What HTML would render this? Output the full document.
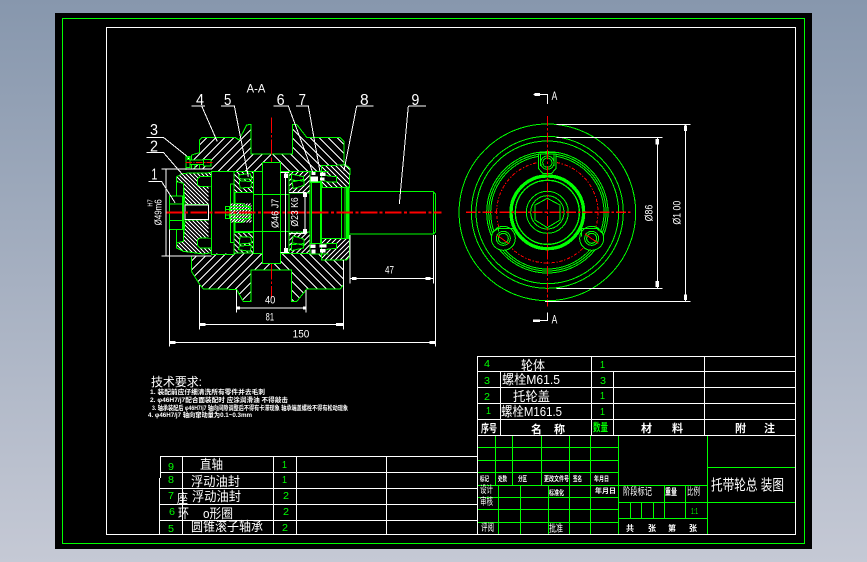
<!DOCTYPE html>
<html>
<head>
<meta charset="utf-8">
<style>
html,body{margin:0;padding:0;width:867px;height:562px;overflow:hidden;background:linear-gradient(#8797ad,#c5c9d5);}
svg{position:absolute;left:0;top:0;display:block;}
text{font-family:"Liberation Sans","Noto Sans CJK SC",sans-serif;fill:#fff;}
.g{fill:#0f0;}
.b{font-weight:bold;}
</style>
</head>
<body>
<svg width="867" height="562" viewBox="0 0 867 562" xmlns="http://www.w3.org/2000/svg" shape-rendering="crispEdges">
<defs>
<pattern id="h1" patternUnits="userSpaceOnUse" width="15" height="15"><path d="M-3 3L3 -3M0 15L15 0M12 18L18 12" stroke="#fff" stroke-width="3" fill="none"/></pattern>
<pattern id="h2" patternUnits="userSpaceOnUse" width="15" height="15"><path d="M-3 12L3 18M0 0L15 15M12 -3L18 3" stroke="#fff" stroke-width="3" fill="none"/></pattern>
<pattern id="h3" patternUnits="userSpaceOnUse" width="12" height="12"><path d="M-3 9L3 15M0 0L12 12M9 -3L15 3" stroke="#fff" stroke-width="3" fill="none"/></pattern>
<pattern id="h4" patternUnits="userSpaceOnUse" width="9" height="9"><path d="M0 9L9 0M-2 2L2 -2M7 11L11 7" stroke="#fff" stroke-width="3" fill="none"/></pattern>
<clipPath id="cl"><path d="M155 225L178 218L178 180L186 172L285 172L297 180L320 135L333 133L333 222L394 222L394 570L333 570L333 665L310 665L290 628L190 627L178 612L155 575Z"/></clipPath>
<clipPath id="cr"><path d="M394 222L457 222L457 133L470 133L500 172L600 172L612 185L612 255L545 255L545 540L610 540L610 615L600 627L500 627L490 640L470 665L455 665L455 570L394 570Z"/></clipPath>
</defs>
<rect x="55" y="13" width="757" height="536" fill="#000"/>
<rect x="62.5" y="18.5" width="742" height="525" fill="none" stroke="#0f0"/>
<rect x="106.5" y="27.5" width="689" height="507" fill="none" stroke="#fff"/>

<!-- section view, coordinates at 3x -->
<g transform="translate(140,80) scale(.33333)" fill="none" stroke-width="3">
<!-- body hatch, explicit lines -->
<path clip-path="url(#cl)" stroke="#fff" d="M320 0L-380 700M347 0L-353 700M374 0L-326 700M401 0L-299 700M428 0L-272 700M455 0L-245 700M482 0L-218 700M509 0L-191 700M536 0L-164 700M563 0L-137 700M590 0L-110 700M617 0L-83 700M644 0L-56 700M671 0L-29 700M698 0L-2 700M725 0L25 700M752 0L52 700M779 0L79 700M806 0L106 700M833 0L133 700M860 0L160 700M887 0L187 700M914 0L214 700M941 0L241 700M968 0L268 700M995 0L295 700M1022 0L322 700"/>
<path clip-path="url(#cr)" stroke="#fff" d="M-310 0L390 700M-283 0L417 700M-256 0L444 700M-229 0L471 700M-202 0L498 700M-175 0L525 700M-148 0L552 700M-121 0L579 700M-94 0L606 700M-67 0L633 700M-40 0L660 700M-13 0L687 700M14 0L714 700M41 0L741 700M68 0L768 700M95 0L795 700M122 0L822 700M149 0L849 700M176 0L876 700M203 0L903 700M230 0L930 700M257 0L957 700M284 0L984 700M311 0L1011 700M338 0L1038 700M365 0L1065 700M392 0L1092 700M419 0L1119 700M446 0L1146 700M473 0L1173 700M500 0L1200 700"/>
<path d="M155 225L178 218L178 180L186 172L285 172L297 180L320 135L333 133L333 222L457 222L457 133L470 133L500 172L600 172L612 185L612 255M545 540L610 540L610 615L600 627L500 627L490 640L470 665L455 665L455 570L333 570L333 665L310 665L290 628L190 627L178 612L155 575" stroke="#0f0"/>
<rect x="155" y="268" width="60" height="262" fill="#000"/>
<rect x="215" y="275" width="330" height="245" fill="#000"/>
<rect x="367" y="247" width="55" height="303" fill="#000"/>
<path d="M155 225L155 268M155 530L155 575" stroke="#0f0"/>
<rect x="367" y="247" width="55" height="303" stroke="#0f0"/>
<path d="M340 275L367 275M422 275L447 275M340 520L367 520M422 520L447 520M215 275L282 275M215 523L282 523" stroke="#0f0"/>
<!-- bolt 3 -->
<path d="M138 230L150 230L150 262L138 262Z" stroke="#0f0" fill="#000"/>
<path d="M150 240L190 240L190 254L150 254Z" stroke="#0f0" fill="#000"/>
<path d="M190 238L213 238L213 258L190 258Z" stroke="#0f0" fill="#000"/>
<rect x="142" y="232" width="6" height="6" fill="#fff" stroke="#0f0"/>
<path d="M138 262L138 270M165 254L165 266M178 254L178 266" stroke="#0f0"/>
<path d="M136 247L218 247" stroke="#f00" stroke-dasharray="20 4 4 4"/>
<!-- left cap -->
<path d="M110 290L130 280L215 278L215 290L180 290L173 297L173 315L180 320L215 320L215 374L135 374L130 310L110 305Z" fill="url(#h3)" stroke="#0f0"/>
<path d="M110 504L130 514L190 522L215 518L215 504L180 504L173 497L173 479L180 474L215 474L215 420L135 420L130 484L110 489Z" fill="url(#h3)" stroke="#0f0"/>
<path d="M110 305L110 489M130 310L130 484" stroke="#0f0"/>
<rect x="206" y="320" width="9" height="154" fill="#000"/>
<path d="M205 372L205 420" stroke="#0f0"/>
<path d="M135 375H205V418H135Z" stroke="#fff" fill="#000"/>
<rect x="88" y="348" width="39" height="100" fill="#000" stroke="#0f0"/>
<path d="M88 372H127M88 422H127" stroke="#0f0"/>
<!-- inner left -->
<rect x="215" y="275" width="67" height="248" stroke="#0f0"/>
<rect x="272" y="312" width="10" height="175" stroke="#0f0"/>
<rect x="285" y="337" width="55" height="118" stroke="#0f0"/>
<rect x="340" y="343" width="107" height="112" stroke="#0f0"/>
<!-- center screw -->
<rect x="272" y="370" width="62" height="58" fill="url(#h4)"/>
<path d="M256 379H332V415H256ZM256 388H332M256 405H332M268 379V415M282 370L305 370L332 385M282 428L305 428L332 410" stroke="#0f0" fill="none"/>
<!-- bearing left -->
<g>
<rect x="282" y="275" width="58" height="62" fill="url(#h2)" stroke="#0f0"/>
<path d="M296 285L330 280L335 298L298 296ZM298 302L335 305L332 322L300 324Z" fill="#000" stroke="#0f0"/>
</g>
<g transform="translate(0,794) scale(1,-1)">
<rect x="282" y="275" width="58" height="62" fill="url(#h1)" stroke="#0f0"/>
<path d="M296 285L330 280L335 298L298 296ZM298 302L335 305L332 322L300 324Z" fill="#000" stroke="#0f0"/>
</g>
<!-- bearing center right -->
<g>
<rect x="447" y="275" width="63" height="64" fill="url(#h1)" stroke="#0f0"/>
<path d="M454 282L490 290L490 303L454 300ZM456 306L492 298L492 316L460 326Z" fill="#000" stroke="#0f0"/>
</g>
<g transform="translate(0,794) scale(1,-1)">
<rect x="447" y="274" width="63" height="64" fill="url(#h2)" stroke="#0f0"/>
<path d="M454 282L490 290L490 303L454 300ZM456 306L492 298L492 316L460 326Z" fill="#000" stroke="#0f0"/>
</g>
<!-- bearing 7 -->
<rect x="510" y="308" width="35" height="182" fill="#000" stroke="#0f0"/>
<path d="M515 308V490M541 308V490" stroke="#0f0"/>
<!-- cover 8 -->
<path d="M545 257L618 255L630 265L628 322L548 322L545 308Z" fill="url(#h2)" stroke="#0f0"/>
<path d="M545 476L628 476L628 530L620 540L545 540Z" fill="url(#h1)" stroke="#0f0"/>
<path d="M510 275H545V305H510Z" fill="#000" stroke="#0f0"/>
<path d="M510 490H545V522H510Z" fill="#000" stroke="#0f0"/>
<path d="M545 280L565 288L590 290L590 306L565 306L545 300ZM545 515L565 507L590 505L590 490L565 490L545 494Z" fill="#000" stroke="#0f0"/>
<g fill="#fff" stroke="none"><rect x="514" y="276" width="12" height="9"/><rect x="540" y="278" width="16" height="10"/><rect x="512" y="290" width="22" height="14"/><rect x="540" y="292" width="13" height="9"/><rect x="512" y="493" width="14" height="11"/><rect x="538" y="494" width="22" height="9"/><rect x="514" y="509" width="13" height="13"/><rect x="540" y="507" width="17" height="11"/></g>
<path d="M508 275H565M508 522H565" stroke="#0f0" stroke-width="3"/>
<rect x="545" y="322" width="60" height="153" fill="#000" stroke="#0f0"/>
<rect x="605" y="322" width="10" height="153" fill="#000" stroke="#0f0"/>
<path d="M615 322H620V475H615" stroke="#0f0"/>
<rect x="618" y="320" width="11" height="156" fill="#0f0"/>
<!-- shaft -->
<path d="M630 335H880L887 342V455L880 462H630" stroke="#0f0"/>
<path d="M880 335V462" stroke="#0f0"/>
<!-- center lines -->
<path d="M394 113V224M394 232V246M394 552V655" stroke="#f00" stroke-dasharray="46 6 8 6"/>
<path d="M78 397H905" stroke="#f00" stroke-width="6" stroke-dasharray="50 7 9 7"/>
<!-- leaders -->
<g stroke="#fff">
<path d="M155 78H195M185 78L232 185M243 78H283L325 290M400 78H445L520 282M468 78H505L540 275M650 78H700M650 78L612 272M805 78H858M805 78L778 372"/>
<path d="M20 172H70L140 228M20 217H70L140 298M25 305H65L105 368"/>
<!-- dims -->
<path d="M65 267H215M65 528H215M78 267V528"/>
<path d="M88 448V800M886 465V800M90 787H885"/>
<path d="M178 615V748M610 540V748M178 733H610"/>
<path d="M290 630V698M498 630V698M290 684H498"/>
<path d="M630 465V610M880 465V610M630 595H880"/>
<path d="M422 277H447M422 518H447M437 277V518M447 338H500M447 460H500M495 338V460"/>
<path d="M433 282h9v10h-9zM433 505h9v10h-9zM491 340h8v9h-8zM491 448h8v9h-8zM638 592h10v6h-10zM858 592h12v6h-12zM290 681h8v6h-8zM490 681h8v6h-8zM180 730h15v6h-15zM590 730h18v6h-18zM90 784h15v6h-15zM870 784h15v6h-15z" fill="#fff"/>
</g>
<g stroke="none" fill="#fff">
<text x="168" y="75" font-size="46" textLength="24" lengthAdjust="spacingAndGlyphs">4</text>
<text x="252" y="75" font-size="46" textLength="22" lengthAdjust="spacingAndGlyphs">5</text>
<text x="410" y="75" font-size="46" textLength="24" lengthAdjust="spacingAndGlyphs">6</text>
<text x="476" y="75" font-size="46" textLength="22" lengthAdjust="spacingAndGlyphs">7</text>
<text x="660" y="75" font-size="46" textLength="26" lengthAdjust="spacingAndGlyphs">8</text>
<text x="814" y="75" font-size="46" textLength="24" lengthAdjust="spacingAndGlyphs">9</text>
<text x="30" y="165" font-size="46" textLength="24" lengthAdjust="spacingAndGlyphs">3</text>
<text x="30" y="214" font-size="46" textLength="24" lengthAdjust="spacingAndGlyphs">2</text>
<text x="34" y="298" font-size="46" textLength="18" lengthAdjust="spacingAndGlyphs">1</text>
<text x="320" y="37" font-size="36" textLength="56" lengthAdjust="spacingAndGlyphs">A-A</text>
<text x="458" y="773" font-size="32" textLength="50" lengthAdjust="spacingAndGlyphs">150</text>
<text x="377" y="722" font-size="32" textLength="25" lengthAdjust="spacingAndGlyphs">81</text>
<text x="375" y="671" font-size="32" textLength="31" lengthAdjust="spacingAndGlyphs">40</text>
<text x="735" y="581" font-size="32" textLength="27" lengthAdjust="spacingAndGlyphs">47</text>
<text transform="translate(64,436) rotate(-90)" font-size="30" textLength="78" lengthAdjust="spacingAndGlyphs">Ø49m6</text>
<text transform="translate(38,380) rotate(-90)" font-size="22" textLength="22" lengthAdjust="spacingAndGlyphs">H7</text>
<text transform="translate(416,444) rotate(-90)" font-size="30" textLength="88" lengthAdjust="spacingAndGlyphs">Ø46 J7</text>
<text transform="translate(474,440) rotate(-90)" font-size="30" textLength="88" lengthAdjust="spacingAndGlyphs">Ø23 K6</text>
</g>
</g>

<!-- end view, coordinates at 3x -->
<g transform="translate(450,80) scale(.33333)" fill="none" stroke="#0f0" stroke-width="3">
<circle cx="292" cy="397" r="265"/>
<circle cx="292" cy="397" r="228"/>
<circle cx="292" cy="397" r="214"/>
<circle cx="292" cy="397" r="182"/>
<circle cx="292" cy="397" r="176"/>
<circle cx="292" cy="397" r="170"/>
<circle cx="292" cy="397" r="152" stroke="#f00" stroke-dasharray="10 5 4 5"/>
<!-- lobes -->
<circle cx="160" cy="475" r="36" fill="#000"/>
<circle cx="425" cy="475" r="36" fill="#000"/>
<path d="M265 222H318V265L305 280H278L265 265Z" fill="#000"/>
<path d="M272 222V258M312 222V258M265 218H318" />
<circle cx="292" cy="248" r="20"/>
<circle cx="292" cy="248" r="14"/>
<g>
<circle cx="160" cy="475" r="21"/><circle cx="160" cy="475" r="15"/>
<path d="M145 455V445H190M145 445L130 455"/>
</g>
<circle cx="425" cy="475" r="21"/><circle cx="425" cy="475" r="15"/>
<path d="M395 470V445H440M440 445L455 458"/>
<path d="M140 465L178 492M405 462L445 490" stroke="#f00"/>
<circle cx="292" cy="397" r="109" stroke-width="10"/>
<circle cx="292" cy="397" r="96" stroke-width="4"/>
<circle cx="292" cy="397" r="63"/>
<circle cx="292" cy="397" r="50"/>
<path d="M292 355L330 375V420L292 443L255 420V375Z"/>
<path d="M292 108V680" stroke="#f00" stroke-dasharray="30 6 8 6"/>
<path d="M48 397H548" stroke="#f00" stroke-width="5" stroke-dasharray="30 6 8 6"/>
<g stroke="#fff">
<path d="M320 133H722M320 172H638M320 625H638M285 664H722M622 172V625M707 133V664"/>
<path d="M618 178h8v14h-8zM618 605h8v14h-8zM704 138h6v14h-6zM704 645h6v14h-6z" fill="#fff"/>
<path d="M250 43H292V72M292 697V722H250"/>
<path d="M255 40h14v6h-14z" fill="#fff"/>
<path d="M250 720h18v4h-18z" fill="#fff"/>
</g>
<g stroke="none" fill="#fff">
<text x="305" y="60" font-size="36" textLength="17" lengthAdjust="spacingAndGlyphs">A</text>
<text x="305" y="731" font-size="36" textLength="17" lengthAdjust="spacingAndGlyphs">A</text>
<text transform="translate(607,424) rotate(-90)" font-size="32" textLength="50" lengthAdjust="spacingAndGlyphs">Ø86</text>
<text transform="translate(692,434) rotate(-90)" font-size="32" textLength="72" lengthAdjust="spacingAndGlyphs">Ø1 00</text>
</g>
</g>

<!-- BOM right -->
<g stroke="#fff" fill="none">
<path d="M477.5 356.5H795M477.5 371.5H795M477.5 387.5H795M477.5 403.5H795M477.5 419.5H795M477.5 435.5H795"/>
<path d="M477.5 356V534M500.5 372V435M591.5 356V435M613.5 372V435M704.5 356V435"/>
</g>
<!-- left table -->
<g stroke="#fff" fill="none">
<path d="M160.5 456.5H477M160.5 472.5H477M159.5 488.5H477M159.5 504.5H477M159.5 520.5H477"/>
<path d="M160.5 456V478M159.5 478V534M182.5 456V534M273.5 456V534M296.5 456V534M386.5 456V534"/>
</g>
<!-- title block -->
<g stroke="#0f0" fill="none">
<path d="M495.5 436V485M512.5 436V485M541.5 436V485M569.5 436V485M590.5 436V485"/>
<path d="M478 447.5H618M478 460.5H618M478 472.5H618M478 485.5H707"/>
<path d="M498.5 485V534M520.5 485V534M548.5 485V534M569.5 485V534M590.5 485V534"/>
<path d="M478 497.5H618M478 509.5H618M478 522.5H618"/>
<path d="M618.5 436V534M707.5 436V534"/>
<path d="M618 502.5H795M618 518.5H707M707 467.5H795"/>
<path d="M630.5 502V518M641.5 502V518M653.5 502V518M664.5 485V518M685.5 485V518"/>
</g>

<!-- BOM text -->
<g font-size="13">
<text x="521" y="370" textLength="24" lengthAdjust="spacingAndGlyphs">轮体</text>
<text x="502" y="384" textLength="58" lengthAdjust="spacingAndGlyphs">螺栓M61.5</text>
<text x="513" y="401" textLength="37" lengthAdjust="spacingAndGlyphs">托轮盖</text>
<text x="501" y="416" textLength="61" lengthAdjust="spacingAndGlyphs">螺栓M161.5</text>
</g>
<g font-size="11" class="b">
<text x="481" y="432" textLength="16" lengthAdjust="spacingAndGlyphs">序号</text>
<text x="531" y="433" font-size="11" textLength="34" xml:space="preserve">名    称</text>
<text x="593" y="431" class="g" style="fill:#0f0" textLength="15" lengthAdjust="spacingAndGlyphs">数量</text>
<text x="641" y="432" textLength="42" xml:space="preserve">材       料</text>
<text x="735" y="432" textLength="40" xml:space="preserve">附       注</text>
</g>
<g font-size="10" style="fill:#0f0">
<text class="g" x="484" y="367" textLength="6" lengthAdjust="spacingAndGlyphs">4</text>
<text class="g" x="484" y="384" textLength="6" lengthAdjust="spacingAndGlyphs">3</text>
<text class="g" x="484" y="400" textLength="6" lengthAdjust="spacingAndGlyphs">2</text>
<text class="g" x="486" y="414" textLength="5" lengthAdjust="spacingAndGlyphs">1</text>
<text class="g" x="600" y="368" textLength="5" lengthAdjust="spacingAndGlyphs">1</text>
<text class="g" x="600" y="384" textLength="6" lengthAdjust="spacingAndGlyphs">3</text>
<text class="g" x="600" y="399" textLength="5" lengthAdjust="spacingAndGlyphs">1</text>
<text class="g" x="600" y="415" textLength="5" lengthAdjust="spacingAndGlyphs">1</text>
<text class="g" x="168" y="470" textLength="6" lengthAdjust="spacingAndGlyphs">9</text>
<text class="g" x="168" y="483" textLength="6" lengthAdjust="spacingAndGlyphs">8</text>
<text class="g" x="168" y="499" textLength="6" lengthAdjust="spacingAndGlyphs">7</text>
<text class="g" x="169" y="515" textLength="6" lengthAdjust="spacingAndGlyphs">6</text>
<text class="g" x="168" y="532" textLength="6" lengthAdjust="spacingAndGlyphs">5</text>
<text class="g" x="282" y="468" textLength="5" lengthAdjust="spacingAndGlyphs">1</text>
<text class="g" x="282" y="483" textLength="5" lengthAdjust="spacingAndGlyphs">1</text>
<text class="g" x="283" y="499" textLength="6" lengthAdjust="spacingAndGlyphs">2</text>
<text class="g" x="283" y="515" textLength="6" lengthAdjust="spacingAndGlyphs">2</text>
<text class="g" x="282" y="531" textLength="6" lengthAdjust="spacingAndGlyphs">2</text>
</g>
<!-- left table text -->
<g font-size="13">
<text x="200" y="469" textLength="23" lengthAdjust="spacingAndGlyphs">直轴</text>
<text x="191" y="486" textLength="49" lengthAdjust="spacingAndGlyphs">浮动油封</text>
<text x="177" y="503" textLength="11" lengthAdjust="spacingAndGlyphs">座</text>
<text x="192" y="501" textLength="49" lengthAdjust="spacingAndGlyphs">浮动油封</text>
<text x="178" y="518" textLength="11" lengthAdjust="spacingAndGlyphs">环</text>
<text x="203" y="518" textLength="30" lengthAdjust="spacingAndGlyphs">o形圈</text>
<text x="191" y="531" textLength="72" lengthAdjust="spacingAndGlyphs">圆锥滚子轴承</text>
</g>
<!-- tech requirements -->
<text x="151" y="386" font-size="12" textLength="51" lengthAdjust="spacing">技术要求:</text>
<g font-size="6.5" class="b">
<text x="150" y="394" textLength="115" lengthAdjust="spacingAndGlyphs">1. 装配前应仔细清洗所有零件并去毛刺</text>
<text x="150" y="402" textLength="138" lengthAdjust="spacingAndGlyphs">2. φ46H7/j7配合面装配时  应涂润滑油 不得敲击</text>
<text x="152" y="410" textLength="196" lengthAdjust="spacingAndGlyphs">3. 轴承装配后 φ46H7/j7 轴向间隙调整后不得有卡滞现象 轴承端盖螺栓不得有松动现象</text>
<text x="148" y="417" textLength="104" lengthAdjust="spacingAndGlyphs">4. φ46H7/j7 轴向窜动量为0.1~0.3mm</text>
</g>
<!-- title block text -->
<g font-size="7" class="b">
<text x="480" y="481" textLength="9" lengthAdjust="spacingAndGlyphs">标记</text>
<text x="498" y="481" textLength="9" lengthAdjust="spacingAndGlyphs">处数</text>
<text x="518" y="481" textLength="9" lengthAdjust="spacingAndGlyphs">分区</text>
<text x="544" y="481" textLength="25" lengthAdjust="spacingAndGlyphs">更改文件号</text>
<text x="573" y="481" textLength="9" lengthAdjust="spacingAndGlyphs">签名</text>
<text x="594" y="481" textLength="15" lengthAdjust="spacingAndGlyphs">年月日</text>
<text x="549" y="495" textLength="15" lengthAdjust="spacingAndGlyphs">标准化</text>
<text x="595" y="493" textLength="21" lengthAdjust="spacingAndGlyphs">年月日</text>
<text x="665" y="495" font-size="9" textLength="12" lengthAdjust="spacingAndGlyphs">重量</text>
</g>
<g font-size="10">
<text x="480" y="493" textLength="13" lengthAdjust="spacingAndGlyphs">设计</text>
<text x="480" y="505" textLength="13" lengthAdjust="spacingAndGlyphs">审核</text>
<text x="481" y="531" textLength="13" lengthAdjust="spacingAndGlyphs">评阅</text>
<text x="549" y="532" textLength="14" lengthAdjust="spacingAndGlyphs">批准</text>
<text x="623" y="495" textLength="29" lengthAdjust="spacingAndGlyphs">阶段标记</text>
<text x="687" y="495" textLength="13" lengthAdjust="spacingAndGlyphs">比例</text>
</g>
<text x="691" y="514" font-size="8" style="fill:#0f0" textLength="7" lengthAdjust="spacingAndGlyphs">1:1</text>
<g font-size="8" class="b">
<text x="626" y="531">共</text>
<text x="648" y="531">张</text>
<text x="668" y="531">第</text>
<text x="689" y="531">张</text>
</g>
<text x="711" y="490" font-size="15" textLength="73" lengthAdjust="spacingAndGlyphs">托带轮总 装图</text>
</svg>
</body>
</html>
